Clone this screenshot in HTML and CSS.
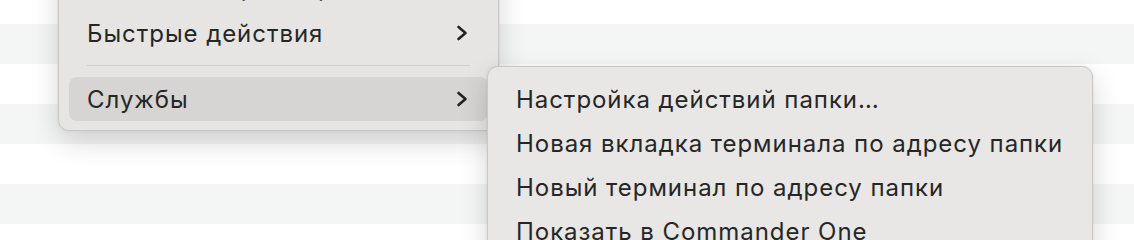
FILE: index.html
```html
<!DOCTYPE html>
<html lang="ru">
<head>
    <meta charset="UTF-8">
    <title>Контекстное меню</title>
    <link rel="stylesheet" href="styles.css">
</head>
<body>
    <div class="list">
        <div class="row"></div>
        <div class="row alt"></div>
        <div class="row"></div>
        <div class="row alt"></div>
        <div class="row"></div>
        <div class="row alt"></div>
        <div class="row"></div>
    </div>

    <div class="menu main-menu">
        <div class="menu-item">
            <span>Показать параметры вида</span>
        </div>
        <div class="menu-item">
            <span>Быстрые действия</span>
            <svg class="chevron" viewBox="0 0 12 16" fill="none" stroke="currentColor" stroke-width="2.6" stroke-linecap="round" stroke-linejoin="round">
                <path d="M2.5 2l7 6-7 6"/>
            </svg>
        </div>
        <div class="separator"></div>
        <div class="menu-item active">
            <span>Службы</span>
            <svg class="chevron" viewBox="0 0 12 16" fill="none" stroke="currentColor" stroke-width="2.6" stroke-linecap="round" stroke-linejoin="round">
                <path d="M2.5 2l7 6-7 6"/>
            </svg>
        </div>
    </div>

    <div class="menu sub-menu">
        <div class="menu-item"><span>Настройка действий папки…</span></div>
        <div class="menu-item"><span>Новая вкладка терминала по адресу папки</span></div>
        <div class="menu-item"><span>Новый терминал по адресу папки</span></div>
        <div class="menu-item"><span>Показать в Commander One</span></div>
    </div>
</body>
</html>
```

FILE: styles.css
```css
* {
    margin: 0;
    padding: 0;
    box-sizing: border-box;
}

body {
    width: 1134px;
    height: 240px;
    overflow: hidden;
    position: relative;
    background: #FFFFFF;
    font-family: Inter, 'Noto Sans', sans-serif;
    color: #262626;
}

.list {
    display: flex;
    flex-direction: column;
    padding-top: 24px;
}

.row {
    height: 40px;
    background: #F4F5F5;
}

.row.alt {
    background: #FFFFFF;
}

.menu {
    position: absolute;
    background: #E6E5E3;
    border-radius: 11px;
    border: 1px solid #C9C8C6;
    box-shadow: 0 10px 28px rgba(0, 0, 0, 0.16), 0 0 3px rgba(0, 0, 0, 0.08);
    display: flex;
    flex-direction: column;
}

.main-menu {
    left: 58px;
    top: -48px;
    width: 441px;
    padding: 10px 10px 9px 10px;
}

.sub-menu {
    left: 487px;
    top: 66px;
    width: 606px;
    height: 200px;
    padding: 10px 10px;
    background: #E8E7E5;
}

.menu-item {
    height: 44px;
    display: flex;
    align-items: center;
    justify-content: space-between;
    padding: 0 20px 0 18px;
    font-size: 24px;
    letter-spacing: 0.95px;
    white-space: nowrap;
    border-radius: 8px;
}

.main-menu .menu-item:first-child {
    height: 48px;
}

.sub-menu .menu-item {
    padding: 0 10px 0 18px;
}

.menu-item.active {
    background: #D6D5D3;
}

.chevron {
    width: 12px;
    height: 16px;
    color: #222222;
}

.separator {
    height: 1px;
    background: #CFCECC;
    margin: 10px 18px 11px 18px;
}
```
